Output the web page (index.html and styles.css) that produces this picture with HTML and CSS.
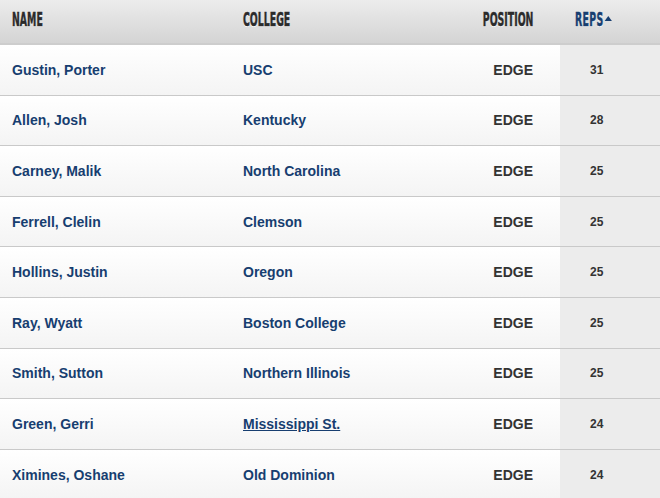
FILE: index.html
```html
<!DOCTYPE html>
<html>
<head>
<meta charset="utf-8">
<link rel="stylesheet" href="styles.css">
</head>
<body>
<div class="table">
  <div class="row head">
    <div class="cell c-name"><span class="ht">NAME</span></div>
    <div class="cell c-college"><span class="ht">COLLEGE</span></div>
    <div class="cell c-pos"><span class="ht">POSITION</span></div>
    <div class="cell c-reps"><span class="ht sorted">REPS</span></div>
  </div>
  <div class="row"><div class="cell c-name">Gustin, Porter</div><div class="cell c-college">USC</div><div class="cell c-pos">EDGE</div><div class="cell c-reps">31</div></div>
  <div class="row"><div class="cell c-name">Allen, Josh</div><div class="cell c-college">Kentucky</div><div class="cell c-pos">EDGE</div><div class="cell c-reps">28</div></div>
  <div class="row"><div class="cell c-name">Carney, Malik</div><div class="cell c-college">North Carolina</div><div class="cell c-pos">EDGE</div><div class="cell c-reps">25</div></div>
  <div class="row"><div class="cell c-name">Ferrell, Clelin</div><div class="cell c-college">Clemson</div><div class="cell c-pos">EDGE</div><div class="cell c-reps">25</div></div>
  <div class="row"><div class="cell c-name">Hollins, Justin</div><div class="cell c-college">Oregon</div><div class="cell c-pos">EDGE</div><div class="cell c-reps">25</div></div>
  <div class="row"><div class="cell c-name">Ray, Wyatt</div><div class="cell c-college">Boston College</div><div class="cell c-pos">EDGE</div><div class="cell c-reps">25</div></div>
  <div class="row"><div class="cell c-name">Smith, Sutton</div><div class="cell c-college">Northern Illinois</div><div class="cell c-pos">EDGE</div><div class="cell c-reps">25</div></div>
  <div class="row"><div class="cell c-name">Green, Gerri</div><div class="cell c-college"><a class="link" href="#">Mississippi St.</a></div><div class="cell c-pos">EDGE</div><div class="cell c-reps">24</div></div>
  <div class="row"><div class="cell c-name">Ximines, Oshane</div><div class="cell c-college">Old Dominion</div><div class="cell c-pos">EDGE</div><div class="cell c-reps">24</div></div>
</div>
</body>
</html>
```
FILE: styles.css
```css
html, body {
  margin: 0;
  padding: 0;
  background: #ffffff;
}
body {
  font-family: "Liberation Sans", Arial, sans-serif;
  width: 660px;
  height: 498px;
  overflow: hidden;
}
.table {
  display: flex;
  flex-direction: column;
}
.row {
  display: grid;
  grid-template-columns: 231px 209px 120px 100px;
  height: 50.6px;
  box-sizing: border-box;
  border-bottom: 1px solid #c9c9c9;
  background: linear-gradient(#ffffff, #f4f4f4);
}
.row.head {
  height: 45px;
  border-bottom: 2px solid #cdcdcd;
  background: linear-gradient(#ececec, #d4d4d4);
}
.cell {
  display: flex;
  align-items: center;
  font-size: 14px;
  font-weight: bold;
  color: #173e70;
}
.c-name, .c-college {
  padding-left: 12px;
}
.c-pos {
  justify-content: flex-end;
  padding-right: 27px;
  color: #333333;
}
.c-reps {
  padding-left: 30px;
  font-size: 12px;
  color: #333333;
  background: #ececec;
}
.head .cell {
  padding-bottom: 6px;
}
.head .c-reps {
  background: transparent;
  padding-left: 15px;
}
.ht {
  display: inline-block;
  white-space: nowrap;
  font-family: "Liberation Sans Narrow", "DejaVu Sans Condensed", sans-serif;
  font-stretch: condensed;
  font-weight: bold;
  font-size: 20px;
  color: #2b2b2b;
  transform: scaleX(0.52);
  transform-origin: left center;
  text-shadow: 0 1px 0 #ffffff;
  letter-spacing: 0;
  -webkit-text-stroke: 0.5px #2b2b2b;
}
.c-pos .ht {
  transform-origin: right center;
}
.ht.sorted {
  color: #173e70;
  -webkit-text-stroke: 0.5px #173e70;
  letter-spacing: 0.6px;
}
.ht.sorted::after {
  content: "";
  display: inline-block;
  width: 0;
  height: 0;
  border-left: 7px solid transparent;
  border-right: 7px solid transparent;
  border-bottom: 5px solid #173e70;
  margin-left: 2px;
  vertical-align: 5px;
}
.link {
  color: #173e70;
  text-decoration: underline;
}
```
